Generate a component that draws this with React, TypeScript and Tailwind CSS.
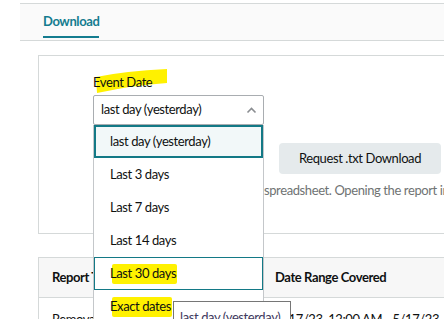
import React from "react";

const options = [
  "last day (yesterday)",
  "Last 3 days",
  "Last 7 days",
  "Last 14 days",
  "Last 30 days",
  "Exact dates",
];

const Marker = ({ children }: { children: React.ReactNode }) => (
  <span className="relative inline-block">
    <span className="absolute bottom-[-1px] left-[2px] right-[-1px] top-[0px] rounded-[2px] bg-[#fff100]" />
    <span className="relative">{children}</span>
  </span>
);

const App = () => {
  return (
    <div className="relative h-[319px] w-[444px] overflow-hidden bg-white font-['Lato',sans-serif] text-[13px] tracking-[-0.4px] text-[#0f1111]">
      {/* tabs */}
      <div className="ml-[20px] mt-[3px] h-[38px] border-y border-[#d5d9d9] bg-[#fafafa] pl-[23px]">
        <div className="inline-flex h-[34px] items-center border-b-2 border-[#147c8f] pt-[3px] font-bold text-[#147c8f]">
          Download
        </div>
      </div>

      {/* request card */}
      <div className="ml-[38px] mt-[14px] h-[179px] border-y border-l border-[#d5d9d9] pl-[54px] pt-[18px]">
        <div className="relative h-[16px] leading-[16px]">
          <svg className="absolute left-[2px] top-[-5px]" width="74" height="26" viewBox="0 0 74 26">
            <path d="M1 8 Q30 2 72 0 L72 14 Q40 16 2 24 Z" fill="#fff100" />
          </svg>
          <span className="relative">Event Date</span>
        </div>

        <div className="mt-[5px] flex items-start">
          <div className="relative w-[171px] shrink-0">
            <div className="flex h-[30px] items-center justify-between whitespace-nowrap rounded-[2px] border border-[#a9adb1] pl-[7px] pr-[6px]">
              <span>last day (yesterday)</span>
              <svg width="11" height="7" viewBox="0 0 11 7">
                <path d="M1.5 5.5 L5.5 1.5 L9.5 5.5" fill="none" stroke="#8a8d91" strokeWidth="1.6" />
              </svg>
            </div>

            <div className="absolute left-0 top-full z-10 w-[171px] border-x border-[#c4c7ca] bg-white">
              {options.map((o, i) => (
                <div
                  key={o}
                  className={
                    i === 0
                      ? "flex h-[33px] items-center whitespace-nowrap bg-[#f2f8f9] pl-[16px] outline-2 -outline-offset-2 outline-[#137986]"
                      : i === 4
                        ? "flex h-[33px] items-center whitespace-nowrap pl-[16px] outline-1 -outline-offset-1 outline-[#137986]"
                        : "flex h-[33px] items-center whitespace-nowrap pl-[16px]"
                  }
                >
                  {i >= 4 ? <Marker>{o}</Marker> : o}
                </div>
              ))}
            </div>
          </div>

          <div className="ml-[15px] flex shrink-0 flex-col">
            <button className="mt-[48px] h-[31px] w-[162px] whitespace-nowrap rounded-[4px] bg-[#e5eaec] text-[#0f1111]">
              Request .txt Download
            </button>
            <p className="ml-[-15px] mt-[8px] whitespace-nowrap leading-[16px] text-[#6f7373]">
              spreadsheet. Opening the report in Microsoft Excel may cause
            </p>
          </div>
        </div>
      </div>

      {/* report table */}
      <div className="ml-[38px] mt-[23px] border-l border-t border-[#d5d9d9]">
        <div className="flex h-[40px] items-center border-b border-[#d5d9d9] bg-[#f7f7f7] font-bold">
          <div className="w-[223px] shrink-0 whitespace-nowrap pl-[13px]">Report Type</div>
          <div className="whitespace-nowrap pl-[13px]">Date Range Covered</div>
        </div>
        <div className="flex pt-[13px] leading-[16px]">
          <div className="w-[223px] shrink-0 whitespace-nowrap pl-[13px]">Removal Order Detail</div>
          <div className="whitespace-nowrap pl-[14px]">5/17/23, 12:00 AM - 5/17/23, 11:59 PM</div>
        </div>
      </div>

      {/* native title tooltip */}
      <div className="absolute left-[173px] top-[301px] z-20 h-[26px] w-[118px] whitespace-nowrap border border-[#767676] bg-white px-[6px] pt-[7px] leading-[16px] text-[#3f3a5e]">
        last day (yesterday)
      </div>
    </div>
  );
};

export default App;
